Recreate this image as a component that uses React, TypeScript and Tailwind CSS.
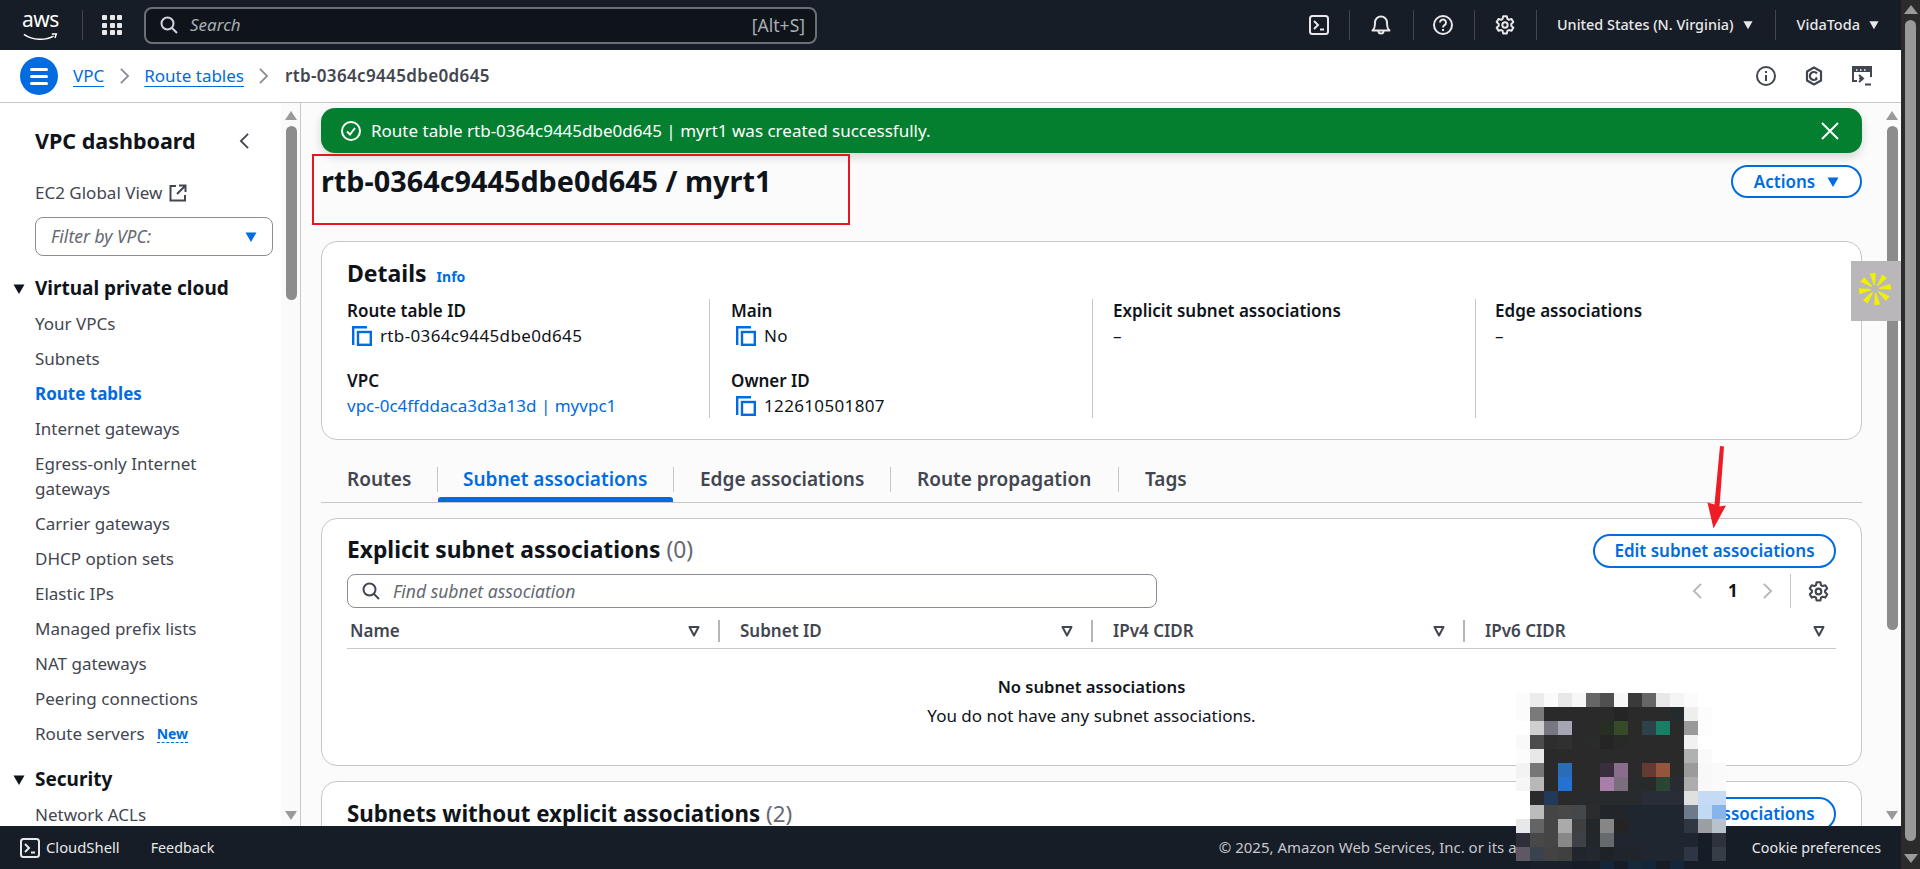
import { ReactNode } from "react";

const navItems = [
  "Your VPCs",
  "Subnets",
  "Route tables",
  "Internet gateways",
  "Egress-only Internet gateways",
  "Carrier gateways",
  "DHCP option sets",
  "Elastic IPs",
  "Managed prefix lists",
  "NAT gateways",
  "Peering connections",
];

// pixelated patch over the footer, row by row from the screenshot
const K = "#2a2a2a";
const D = "#20262f";
const mosaic: (string | null)[][] = [
  ["#fbfbfb", "#ececec", "#fafafa", "#e8e8e8", "#f7f7f7", "#666666", "#505050", "#f7f7f7", "#3a3a3a", "#666666", "#e8e8e8", "#f5f5f5", "#fbfbfb", null, null],
  ["#fbfbfb", "#7a7a7a", K, K, K, K, K, "#252525", K, K, K, "#252a2d", "#eeeeee", "#fcfcfc", null],
  ["#ffffff", "#cfcfcf", "#777781", "#a5a5b5", K, K, "#272e24", "#364a28", K, "#2d414a", "#1a7d66", K, "#999999", "#fdfdfd", null],
  ["#f9f9f9", "#4c4c4c", "#2e2e2e", "#303030", K, "#292c2a", "#252525", "#272a26", K, K, K, K, "#f1f1f1", null, null],
  ["#fcfcfc", "#e8e8e8", K, K, K, K, K, K, K, K, K, K, "#b0b2b2", "#fafafa", null],
  ["#f3f3f3", "#767676", K, "#2a6cb5", K, K, "#3a2d3e", "#8a6c8c", K, "#643a33", "#95543c", K, "#9b9b9b", "#f8f8f8", "#fafafa"],
  ["#f6f6f6", "#b8b8b8", K, "#2573d0", K, K, "#a97ea8", "#7a6d7c", "#272b2c", "#272b2c", "#2b4534", "#282b33", "#acacac", "#f8f8f8", "#fafafa"],
  ["#ffffff", "#2a2a2a", "#23395a", K, "#282b2d", "#282b2d", "#282b2d", "#282b2d", "#282b2d", "#292d38", "#292d38", "#292d38", "#e0e0e0", "#c5dbf5", "#c5dbf5"],
  ["#ffffff", "#bcbcbc", "#454545", "#484848", "#44484a", "#2a2c2e", "#22262a", "#22262a", D, D, D, D, "#6c7a8a", "#c2d9f4", "#85b5ec"],
  ["#e6e8ea", "#646464", "#454545", "#aaaaaa", "#3f3f3f", "#22272b", "#868686", "#252425", D, D, D, D, "#2f3842", "#9b9ea2", "#b8c2cc"],
  ["#2e2f38", "#484848", "#454545", "#888888", "#3e4246", "#22272b", "#666a6c", D, D, D, D, D, "#1f2631", "#161d26", "#2e333b"],
  ["#5e5865", "#3a434d", "#434343", "#404040", "#20252e", "#23272e", "#1e2328", "#20252b", "#20252b", D, D, D, "#2e3544", "#161d26", "#353d47"],
  ["#161d26", "#18212b", "#18212b", "#18212b", "#161d26", "#161d26", "#14273a", "#161d26", "#16293a", "#14273a", "#161d26", "#14273a", "#161d26", "#161d26", "#161d26"],
];

const Sep = () => <div className="h-[30px] w-px bg-[#424650]" />;

const Terminal = ({ className }: { className: string }) => (
  <svg viewBox="0 0 20 20" className={className} fill="none" stroke="currentColor" strokeWidth="2">
    <rect x="1" y="1" width="18" height="18" rx="2.5" />
    <path d="M5 6l4 4-4 4M11 14.5h4" />
  </svg>
);

const Gear = ({ className }: { className: string }) => (
  <svg viewBox="0 0 20 20" className={className} fill="none" stroke="currentColor" strokeWidth="2" strokeLinejoin="round">
    <circle cx="10" cy="10" r="2.7" />
    <path d="M8.2 1.2h3.6l.6 2.7 1.5.9 2.6-.8 1.8 3.1-2 1.9v1.8l2 1.9-1.8 3.1-2.6-.8-1.5.9-.6 2.7H8.2l-.6-2.7-1.5-.9-2.6.8-1.8-3.1 2-1.9V9L1.7 7.1l1.8-3.1 2.6.8 1.5-.9z" />
  </svg>
);

const Copy = () => (
  <svg viewBox="0 0 20 20" className="h-5 w-5 shrink-0" fill="none" stroke="#006ce0" strokeWidth="2.4">
    <path d="M1.2 19V1.2H15" />
    <rect x="6" y="6" width="12.8" height="12.8" />
  </svg>
);

const Caret = ({ className }: { className: string }) => (
  <svg viewBox="0 0 12 12" className={className} fill="currentColor">
    <path d="M0.5 1.5h11L6 11z" />
  </svg>
);

const SortCaret = () => (
  <svg viewBox="0 0 12 12" className="h-3 w-3 shrink-0 text-[#424650]" fill="none" stroke="currentColor" strokeWidth="2" strokeLinejoin="round">
    <path d="M1.5 2h9L6 10.5z" />
  </svg>
);

const SearchIcon = ({ className }: { className: string }) => (
  <svg viewBox="0 0 18 18" className={className} fill="none" stroke="currentColor" strokeWidth="2">
    <circle cx="7.5" cy="7.5" r="6" />
    <path d="M12 12l5 5" />
  </svg>
);

const Chevron = ({ className, d }: { className: string; d: string }) => (
  <svg viewBox="0 0 12 20" className={className} fill="none" stroke="currentColor" strokeWidth="2">
    <path d={d} />
  </svg>
);

const Field = ({ label, children }: { label: string; children: ReactNode }) => (
  <div className="h-[70px]">
    <div className="text-[17px]/6 font-semibold text-[#0f141a]">{label}</div>
    <div className="mt-px text-[17px]/6 text-[#0f141a]">{children}</div>
  </div>
);

const CopyValue = ({ value }: { value: string }) => (
  <span className="ml-[5px] flex items-center gap-[8px] tracking-[0.35px]">
    <Copy />
    {value}
  </span>
);

const Tab = ({ label, width, active }: { label: string; width: string; active?: boolean }) => (
  <div className={`relative flex h-full items-center ${width}`}>
    <div className={`mt-[16px] flex h-[25px] w-full items-center border-l border-[#c6c6cd] text-[19px] font-semibold ${active ? "pl-[25px] text-[#006ce0]" : "pl-[26px] text-[#424650]"}`}>
      {label}
    </div>
    {active && <div className="absolute bottom-0 left-px right-0 h-[5px] rounded-t-[3px] bg-[#006ce0]" />}
  </div>
);

const HeaderCell = ({ label, width, first, last }: { label: string; width: string; first?: boolean; last?: boolean }) => (
  <div className={`mt-[5px] flex h-[22px] items-center justify-between ${width} ${first ? "pl-[3px]" : "border-l-2 border-[#b4b4bb] pl-[20px]"} ${last ? "pr-[10px]" : "pr-[18px]"}`}>
    <span className="text-[17px] font-semibold text-[#424650]">{label}</span>
    <SortCaret />
  </div>
);

const EditButton = () => (
  <div className="flex h-[34px] w-[243px] items-center justify-center rounded-full border-2 border-[#006ce0] bg-white text-[17px] font-semibold text-[#006ce0]">
    Edit subnet associations
  </div>
);

const ScrollBar = ({ height }: { height: string }) => (
  <div className="flex h-full w-[12px] shrink-0 flex-col items-center pt-[8px]">
    <div className="h-0 w-0 border-x-[6px] border-b-[9px] border-x-transparent border-b-[#9a9a9a]" />
    <div className={`mt-[6px] w-[11px] rounded-full bg-[#8c8c8c] ${height}`} />
    <div className="mt-auto mb-[6px] h-0 w-0 border-x-[6px] border-t-[9px] border-x-transparent border-t-[#9a9a9a]" />
  </div>
);

export default function App() {
  return (
    <div className="relative flex h-[869px] w-full overflow-hidden font-['Noto_Sans',sans-serif] text-[#0f141a]">
      <div className="flex h-full w-[1901px] shrink-0 flex-col">
        {/* top bar */}
        <header className="flex h-[50px] shrink-0 items-center bg-[#161d26] text-[#e8e8ea]">
          <div className="relative ml-[21px] h-[38px] w-[40px] shrink-0 text-white">
            <div className="absolute -top-[2px] left-[1px] text-[21px] leading-[30px] tracking-[-0.5px]">aws</div>
            <svg viewBox="0 0 40 10" className="absolute bottom-[2px] left-0 h-[9px] w-[40px]" fill="none" stroke="#fff" strokeWidth="1.6">
              <path d="M1 1.5c10 7 24 7 33 2" />
              <path d="M32 1.2l5-.2-1.5 4.5" />
            </svg>
          </div>
          <div className="ml-[21px] h-[30px] w-px bg-[#424650]" />
          <div className="ml-[19px] grid w-[20px] grid-cols-3 gap-[2.5px]">
            {Array.from({ length: 9 }).map((_, i) => (
              <div key={i} className="h-[5px] w-[5px] rounded-[1px] bg-[#e8e8ea]" />
            ))}
          </div>
          <div className="ml-[22px] flex h-[37px] w-[673px] items-center rounded-[8px] border-2 border-[#6b6f78] bg-[#0f141a] pl-[14px] pr-[10px]">
            <SearchIcon className="h-[18px] w-[18px] text-[#d1d5db]" />
            <span className="ml-[12px] flex-1 text-[17px] italic text-[#a8acb3]">Search</span>
            <span className="text-[17.5px] text-[#a8acb3]">[Alt+S]</span>
          </div>
          <div className="ml-[492px]">
            <Terminal className="h-5 w-5" />
          </div>
          <div className="ml-[20px]"><Sep /></div>
          <svg viewBox="0 0 20 20" className="ml-[21px] h-5 w-5" fill="none" stroke="currentColor" strokeWidth="2" strokeLinejoin="round">
            <path d="M1.5 15.5h17c-2-2-2.5-3-2.5-8a6 6 0 0 0-12 0c0 5-.5 6-2.5 8z" />
            <path d="M7.5 16a2.5 2.5 0 0 0 5 0" />
          </svg>
          <div className="ml-[22px]"><Sep /></div>
          <svg viewBox="0 0 20 20" className="ml-[19px] h-5 w-5" fill="none" stroke="currentColor" strokeWidth="2">
            <circle cx="10" cy="10" r="9" />
            <path d="M7 7.5a3 3 0 1 1 4.5 2.6c-1 .6-1.5 1.1-1.5 2.4" />
            <path d="M10 14v2" />
          </svg>
          <div className="ml-[21px]"><Sep /></div>
          <Gear className="ml-[20px] h-5 w-5" />
          <div className="ml-[21px]"><Sep /></div>
          <span className="ml-[20px] whitespace-nowrap text-[14.4px] font-medium">United States (N. Virginia)</span>
          <Caret className="ml-[9px] h-[10px] w-[10px]" />
          <div className="ml-[22px]"><Sep /></div>
          <span className="ml-[21px] text-[14.5px] font-medium">VidaToda</span>
          <Caret className="ml-[9px] h-[10px] w-[10px]" />
        </header>

        {/* breadcrumbs */}
        <div className="flex h-[53px] shrink-0 items-center border-b border-[#c6c6cd] bg-white">
          <div className="ml-[20px] flex h-[38px] w-[38px] flex-col items-center justify-center gap-[4px] rounded-full bg-[#006ce0]">
            <div className="h-[3px] w-[18px] rounded-sm bg-white" />
            <div className="h-[3px] w-[18px] rounded-sm bg-white" />
            <div className="h-[3px] w-[18px] rounded-sm bg-white" />
          </div>
          <span className="ml-[15px] text-[17px] text-[#006ce0] underline underline-offset-4">VPC</span>
          <Chevron className="ml-[15px] h-[18px] w-[11px] text-[#8c8c94]" d="M2 2l8 8-8 8" />
          <span className="ml-[14px] text-[17px] text-[#006ce0] underline underline-offset-4">Route tables</span>
          <Chevron className="ml-[14px] h-[18px] w-[11px] text-[#8c8c94]" d="M2 2l8 8-8 8" />
          <span className="ml-[16px] text-[17px] font-semibold tracking-[0.35px] text-[#424650]">rtb-0364c9445dbe0d645</span>
          <svg viewBox="0 0 20 20" className="ml-auto h-5 w-5 text-[#424650]" fill="none" stroke="currentColor" strokeWidth="2">
            <circle cx="10" cy="10" r="9" />
            <path d="M10 9v6M10 5v2" />
          </svg>
          <svg viewBox="0 0 20 20" className="ml-[28px] h-5 w-5 text-[#424650]" fill="none" stroke="currentColor" strokeWidth="2.2" strokeLinejoin="round">
            <path d="M10 1.5l7 4v9l-7 4-7-4v-9z" />
            <path d="M13 13l-1.5-1.5M13 7.5a4 4 0 1 0 0 5" />
          </svg>
          <svg viewBox="0 0 20 20" className="ml-[28px] mr-[29px] h-5 w-5 text-[#424650]" fill="none" stroke="currentColor" strokeWidth="2">
            <path d="M5 15H1V1h18v10" />
            <path d="M1 4h18" strokeWidth="4" />
            <path d="M4 4h1.5M8 4h1.5M12 4h1.5" stroke="#fff" strokeWidth="1.5" />
            <path d="M7 9l4 3.5L7 16M7 12.5h3M13 18.5h6" />
          </svg>
        </div>

        <div className="flex min-h-0 flex-1">
          {/* side navigation */}
          <aside className="flex h-full w-[301px] shrink-0 border-r border-[#c6c6cd] bg-white">
            <div className="h-full w-[281px] shrink-0 overflow-hidden pl-[35px]">
              <div className="mt-[25px] flex items-center justify-between pr-[31px]">
                <span className="text-[21.5px]/[26px] font-bold">VPC dashboard</span>
                <Chevron className="h-[18px] w-[11px] text-[#424650]" d="M10 2l-8 8 8 8" />
              </div>
              <div className="mt-[27px] flex items-center gap-[7px] text-[17px]/6 text-[#424650]">
                EC2 Global View
                <svg viewBox="0 0 18 18" className="h-[18px] w-[18px]" fill="none" stroke="currentColor" strokeWidth="2">
                  <path d="M7 2H1.5v14.5H16V11M10 1.5h6.5V8M16 2L8 10" />
                </svg>
              </div>
              <div className="mt-[12px] flex h-[39px] w-[238px] items-center justify-between rounded-[8px] border border-[#8c8c94] bg-white pl-[15px] pr-[15px]">
                <span className="text-[17.5px] italic text-[#656871]">Filter by VPC:</span>
                <Caret className="h-3 w-3 text-[#006ce0]" />
              </div>
              <div className="relative mt-[19px]">
                <Caret className="absolute -left-[22px] top-[8px] h-3 w-3" />
                <div className="text-[19px]/[26px] font-bold">Virtual private cloud</div>
              </div>
              <div className="mt-[10px] w-[205px] text-[17px]/[25px] text-[#424650]">
                {navItems.map((item) => (
                  <div key={item} className={`mb-[10px] ${item === "Route tables" ? "font-bold text-[#006ce0]" : ""}`}>
                    {item}
                  </div>
                ))}
                <div className="mb-[10px] flex items-center gap-[12px]">
                  Route servers
                  <span className="border-b border-dashed border-[#006ce0] text-[14px]/[17px] font-bold text-[#006ce0]">New</span>
                </div>
              </div>
              <div className="relative mt-[20px]">
                <Caret className="absolute -left-[22px] top-[8px] h-3 w-3" />
                <div className="text-[19px]/[26px] font-bold">Security</div>
              </div>
              <div className="mt-[10px] text-[17px]/[25px] text-[#424650]">Network ACLs</div>
            </div>
            <div className="h-full w-[19px] bg-[#fafafa] pl-[4px]">
              <ScrollBar height="h-[174px]" />
            </div>
          </aside>

          {/* main content */}
          <main className="flex h-full min-w-0 flex-1 overflow-hidden bg-[#fbfbfb]">
            <div className="ml-[20px] w-[1541px] shrink-0">
              <div className="mt-[5px] flex h-[45px] items-center rounded-[14px] bg-[#037f2f] pl-[20px] pr-[23px] text-[17px] text-white shadow-[0_4px_10px_rgba(0,0,0,0.15)]">
                <svg viewBox="0 0 20 20" className="h-5 w-5" fill="none" stroke="#fff" strokeWidth="2">
                  <circle cx="10" cy="10" r="9" />
                  <path d="M6 10.5l3 3 5-6.5" />
                </svg>
                <span className="ml-[10px] flex-1">Route table rtb-0364c9445dbe0d645 | myrt1 was created successfully.</span>
                <svg viewBox="0 0 18 18" className="h-[18px] w-[18px]" fill="none" stroke="#fff" strokeWidth="2">
                  <path d="M1 1l16 16M17 1L1 17" />
                </svg>
              </div>

              <div className="flex h-[88px] items-start justify-between">
                <h1 className="mt-[9px] text-[28.8px]/[38px] font-bold">rtb-0364c9445dbe0d645 / myrt1</h1>
                <div className="mt-[12px] flex h-[33px] w-[131px] items-center justify-center gap-[12px] rounded-full border-2 border-[#006ce0] bg-white text-[17px] font-semibold text-[#006ce0]">
                  Actions
                  <Caret className="h-3 w-3" />
                </div>
              </div>

              {/* details */}
              <section className="h-[199px] rounded-2xl border border-[#c6c6cd] bg-white pl-[25px]">
                <div className="mt-[17px] flex items-baseline gap-[10px]">
                  <span className="text-[23px]/[28px] font-bold">Details</span>
                  <span className="text-[14px] font-bold text-[#006ce0]">Info</span>
                </div>
                <div className="mt-[12px] flex h-[119px]">
                  <div className="w-[362px]">
                    <Field label="Route table ID"><CopyValue value="rtb-0364c9445dbe0d645" /></Field>
                    <Field label="VPC"><span className="text-[#006ce0]">vpc-0c4ffddaca3d3a13d | myvpc1</span></Field>
                  </div>
                  <div className="w-[383px] border-l border-[#c6c6cd] pl-[21px]">
                    <Field label="Main"><CopyValue value="No" /></Field>
                    <Field label="Owner ID"><CopyValue value="122610501807" /></Field>
                  </div>
                  <div className="w-[383px] border-l border-[#c6c6cd] pl-[20px]">
                    <Field label="Explicit subnet associations">–</Field>
                  </div>
                  <div className="border-l border-[#c6c6cd] pl-[19px]">
                    <Field label="Edge associations">–</Field>
                  </div>
                </div>
              </section>

              {/* tabs */}
              <div className="flex h-[63px] items-center border-b border-[#c6c6cd]">
                <div className="flex h-full w-[116px] items-center pl-[26px] pt-[16px] text-[19px] font-semibold text-[#424650]">Routes</div>
                <Tab label="Subnet associations" width="w-[236px]" active />
                <Tab label="Edge associations" width="w-[217px]" />
                <Tab label="Route propagation" width="w-[228px]" />
                <Tab label="Tags" width="w-[100px]" />
              </div>

              {/* explicit associations */}
              <section className="mt-[15px] h-[248px] rounded-2xl border border-[#c6c6cd] bg-white pl-[25px] pr-[25px] pt-[15px]">
                <div className="flex h-[34px] items-center justify-between">
                  <h2 className="-mt-[2px] text-[22.8px]/[28px] font-bold">
                    Explicit subnet associations <span className="font-normal text-[#656871]">(0)</span>
                  </h2>
                  <EditButton />
                </div>
                <div className="mt-[6px] flex h-[34px] items-center">
                  <div className="flex h-[34px] w-[810px] items-center rounded-[8px] border border-[#8c8c94] bg-white pl-[14px]">
                    <SearchIcon className="h-[18px] w-[18px] text-[#424650]" />
                    <span className="ml-[13px] text-[17.5px] italic text-[#656871]">Find subnet association</span>
                  </div>
                  <Chevron className="ml-[535px] h-[18px] w-[11px] text-[#b4b4bb]" d="M10 2l-8 8 8 8" />
                  <span className="ml-[25px] text-[17px] font-bold">1</span>
                  <Chevron className="ml-[24px] h-[18px] w-[11px] text-[#b4b4bb]" d="M2 2l8 8-8 8" />
                  <div className="ml-[17px] h-[34px] w-px bg-[#c6c6cd]" />
                  <Gear className="ml-[17px] h-[21px] w-[21px] text-[#424650]" />
                </div>
                <div className="flex h-[41px] items-center border-b border-[#c6c6cd]">
                  <HeaderCell label="Name" width="w-[371px]" first />
                  <HeaderCell label="Subnet ID" width="w-[373px]" />
                  <HeaderCell label="IPv4 CIDR" width="w-[372px]" />
                  <HeaderCell label="IPv6 CIDR" width="w-[372px]" last />
                </div>
                <div className="mt-[26px] text-center text-[16.6px]/6 font-semibold">No subnet associations</div>
                <div className="mt-[5px] text-center text-[17px]/6">You do not have any subnet associations.</div>
              </section>

              {/* second table, cut off by the footer */}
              <section className="mt-[15px] h-[200px] rounded-2xl border border-[#c6c6cd] bg-white pl-[25px] pr-[25px] pt-[15px]">
                <div className="flex h-[34px] items-start justify-between">
                  <h2 className="mt-[5px] text-[22.3px]/[24px] font-bold">
                    Subnets without explicit associations <span className="font-normal text-[#656871]">(2)</span>
                  </h2>
                  <EditButton />
                </div>
              </section>
            </div>
            <div className="ml-[24px]">
              <ScrollBar height="h-[504px]" />
            </div>
          </main>
        </div>

        {/* footer */}
        <footer className="flex h-[43px] shrink-0 items-center bg-[#161d26] text-[14.3px] text-[#e8e8ea]">
          <Terminal className="ml-[20px] h-5 w-5" />
          <span className="ml-[6px] text-[14.8px]">CloudShell</span>
          <span className="ml-[31px] flex-1">Feedback</span>
          <span className="w-[533px] overflow-hidden whitespace-nowrap text-[15px] text-[#c6c6cd]">© 2025, Amazon Web Services, Inc. or its affiliates. All rights reserved.</span>
          <span className="mr-[20px]">Cookie preferences</span>
        </footer>
      </div>

      {/* browser scrollbar */}
      <div className="flex h-full flex-1 flex-col items-center bg-[#2b2b2b] pt-[5px]">
        <div className="h-0 w-0 border-x-[7px] border-b-[9px] border-x-transparent border-b-[#9a9a9a]" />
        <div className="mt-[6px] h-[821px] w-[11px] rounded-full bg-[#999999]" />
        <div className="mt-auto mb-[6px] h-0 w-0 border-x-[7px] border-t-[9px] border-x-transparent border-t-[#9a9a9a]" />
      </div>

      {/* widget pinned to the page edge */}
      <div className="absolute left-[1851px] top-[261px] flex h-[60px] w-[50px] items-center justify-center bg-[#b9b7ba] pb-[4px] pr-[2px]">
        <svg viewBox="-17 -17 34 34" className="h-[34px] w-[34px]" fill="#f0f000">
          {[-8, 37, 82, 127, 172, 217, 262, 307].map((a) => (
            <path key={a} d="M-0.6 -4L0.6 -4L3 -16L-3 -16Z" transform={`rotate(${a})`} />
          ))}
        </svg>
      </div>

      {/* annotations */}
      <div className="absolute left-[312px] top-[154px] h-[71px] w-[538px] border-2 border-[#e8141f]" />
      <svg className="absolute left-[1700px] top-[440px] h-[95px] w-[32px]" viewBox="0 0 32 95" fill="#ee1c25">
        <path d="M20 6l4 .5-4.5 60 6.5-1-12.5 23-6-26 7 2z" />
      </svg>

      {/* blurred patch */}
      <svg className="absolute left-[1516px] top-[693px] h-[182px] w-[210px]" viewBox="0 0 210 182" shapeRendering="crispEdges">
        {mosaic.map((row, y) =>
          row.map((fill, x) => (fill ? <rect key={`${x}-${y}`} x={x * 14} y={y * 14} width="14" height="14" fill={fill} /> : null)),
        )}
      </svg>
    </div>
  );
}
